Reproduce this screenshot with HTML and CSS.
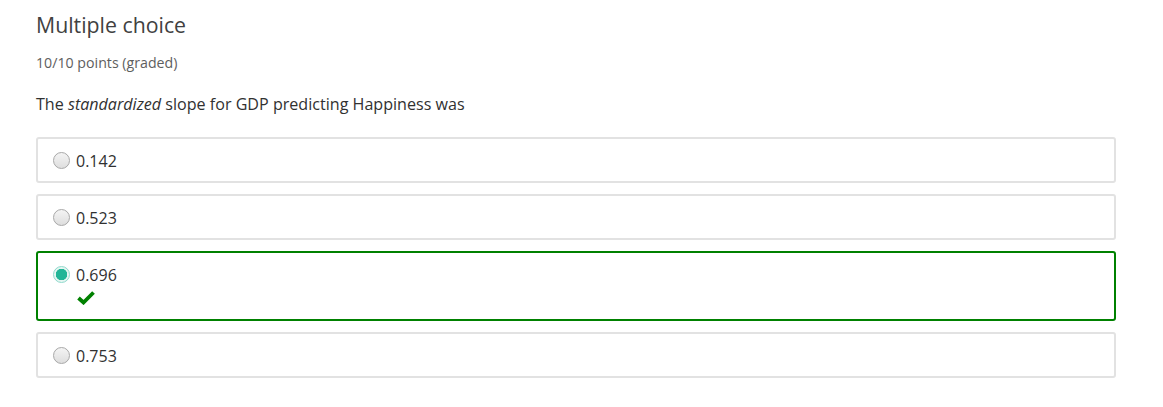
FILE: index.html
```html
<!DOCTYPE html>
<html>
<head>
<meta charset="utf-8">
<link rel="stylesheet" href="styles.css">
</head>
<body>
<div class="problem">
  <h3 class="title">Multiple choice</h3>
  <div class="points">10/10 points (graded)</div>
  <p class="question">The <em>standardized</em> slope for GDP predicting Happiness was</p>
  <div class="choices">
    <label class="choice"><span class="radio"></span><span class="text">0.142</span></label>
    <label class="choice"><span class="radio"></span><span class="text">0.523</span></label>
    <label class="choice correct">
      <span class="radio checked"></span>
      <span class="body">
        <span class="text">0.696</span>
        <svg class="check" width="18" height="14" viewBox="0 0 18 14"><path d="M1.5 7 L6.5 11.5 L16.5 1.5" fill="none" stroke="#008100" stroke-width="3.8"/></svg>
      </span>
    </label>
    <label class="choice"><span class="radio"></span><span class="text">0.753</span></label>
  </div>
</div>
</body>
</html>
```
FILE: styles.css
```css
html, body {
  margin: 0;
  padding: 0;
  background: #fff;
}
body {
  font-family: "Open Sans", "DejaVu Sans", sans-serif;
  color: #313131;
}
.problem {
  padding: 10px 47px 0 36px;
}
.title {
  margin: 0;
  font-size: 21.3px;
  font-weight: 400;
  color: #414141;
  line-height: 30px;
}
.points {
  margin-top: 13px;
  font-size: 14.2px;
  color: #5e5e5e;
  line-height: 20px;
}
.question {
  margin: 19px 0 0;
  font-size: 16.1px;
  line-height: 24px;
  color: #313131;
}
.choices {
  margin-top: 21px;
  display: flex;
  flex-direction: column;
  gap: 11px;
}
.choice {
  display: flex;
  align-items: flex-start;
  gap: 6px;
  border: 2px solid #e2e2e2;
  border-radius: 3px;
  padding: 11px 14px 9px 15px;
  min-height: 22px;
  font-size: 16px;
  line-height: 22px;
}
.choice.correct {
  border-color: #008100;
  padding-bottom: 14px;
}
.radio {
  box-sizing: border-box;
  flex: none;
  width: 17px;
  height: 17px;
  margin-top: 2px;
  border-radius: 50%;
  border: 1px solid #a8a8a8;
  background: linear-gradient(#f4f4f4, #dedede);
}
.radio.checked {
  border: 1px solid #8fd9cc;
  background: radial-gradient(circle, #22b597 0 5.5px, #e6f6f2 6px);
}
.body {
  display: flex;
  flex-direction: column;
}
.check {
  margin: 5px 0 0 1px;
  display: block;
}
```
